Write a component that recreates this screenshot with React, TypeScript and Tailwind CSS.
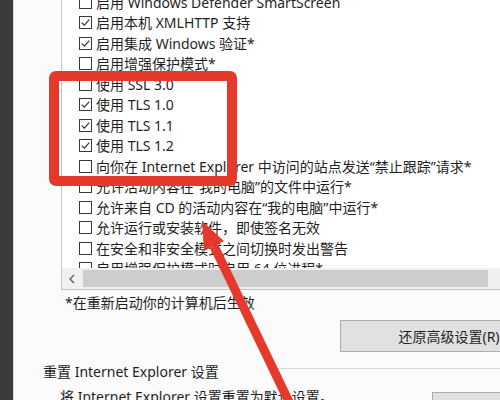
import React from "react";

interface OptionRow {
  label: string;
  on: boolean;
}

const rows: OptionRow[] = [
  { label: "启用 Windows Defender SmartScreen", on: false },
  { label: "启用本机 XMLHTTP 支持", on: true },
  { label: "启用集成 Windows 验证*", on: true },
  { label: "启用增强保护模式*", on: false },
  { label: "使用 SSL 3.0", on: false },
  { label: "使用 TLS 1.0", on: true },
  { label: "使用 TLS 1.1", on: true },
  { label: "使用 TLS 1.2", on: true },
  { label: "向你在 Internet Explorer 中访问的站点发送“禁止跟踪”请求*", on: false },
  { label: "允许活动内容在“我的电脑”的文件中运行*", on: false },
  { label: "允许来自 CD 的活动内容在“我的电脑”中运行*", on: false },
  { label: "允许运行或安装软件，即使签名无效", on: false },
  { label: "在安全和非安全模式之间切换时发出警告", on: false },
  { label: "启用增强保护模式时启用 64 位进程*", on: false },
];

function CheckBox({ on }: { on: boolean }) {
  return (
    <span className="flex h-[13px] w-[13px] shrink-0 items-center justify-center border border-[#3a3a3a] bg-white">
      {on && (
        <svg width="11" height="11" viewBox="0 0 11 11">
          <path d="M1.8 5.6 L4.3 8.1 L9.3 2.6" fill="none" stroke="#333" strokeWidth="1.2" />
        </svg>
      )}
    </span>
  );
}

export default function App() {
  return (
    <div className="relative flex h-[400px] w-[500px] overflow-hidden bg-white font-['Noto_Sans','Noto_Sans_CJK_SC',sans-serif] text-[14px] text-[#1f1f1f]">
      {/* dark window edge */}
      <div className="w-[13px] shrink-0 bg-[#3b3b3b]" />

      <div className="flex min-w-0 flex-1 flex-col border-l border-[#dcdce8] bg-[#fbfbfb]">
        {/* settings list */}
        <div className="ml-[47px] mt-[-8px] flex h-[298px] w-[500px] shrink-0 flex-col border-b border-l border-[#c4c4c4] bg-white">
          <div className="flex-1 overflow-hidden">
            {rows.map((r, i) => (
              <div key={i} className="flex h-[20.5px] items-center gap-[4px] whitespace-nowrap pl-[17px]">
                <CheckBox on={r.on} />
                <span>{r.label}</span>
              </div>
            ))}
          </div>
          <div className="flex h-[21px] shrink-0 items-center bg-[#f0f0f0]">
            <div className="flex w-[20px] justify-center">
              <svg width="8" height="10" viewBox="0 0 8 10">
                <path d="M6 1 L2 5 L6 9" fill="none" stroke="#606060" strokeWidth="1.4" />
              </svg>
            </div>
            <div className="ml-[1px] h-[17px] w-[405px] bg-[#cdcdcd]" />
          </div>
        </div>

        <p className="ml-[51px] mt-[3px] leading-[20px]">*在重新启动你的计算机后生效</p>

        <div className="ml-[326px] mt-[7px] flex h-[32px] w-[218px] shrink-0 items-center justify-center border border-[#adadad] bg-[#e1e1e1] whitespace-nowrap">
          还原高级设置(R)
        </div>

        {/* reset group */}
        <div className="mt-[10px] flex h-[20px] shrink-0">
          <span className="ml-[29px] whitespace-nowrap leading-[20px]">重置 Internet Explorer 设置</span>
          <div className="ml-[54px] mt-[6px] h-px flex-1 bg-[#d6d6d6]" />
        </div>
        <div className="mt-[5px] flex">
          <div className="w-[418px] shrink-0">
            <p className="ml-[46px] whitespace-nowrap leading-[20px]">将 Internet Explorer 设置重置为默认设置。</p>
          </div>
          <div className="mt-[5px] h-[32px] w-[90px] shrink-0 border border-[#adadad] bg-[#e1e1e1]" />
        </div>
      </div>

      {/* annotation overlays */}
      <div className="pointer-events-none absolute left-[49px] top-[71px] h-[115px] w-[188px] rounded-[7px] border-[10px] border-[#e5392c]" />
      <svg className="pointer-events-none absolute left-0 top-0" width="500" height="400" viewBox="0 0 500 400">
        <line x1="290" y1="404" x2="214" y2="246" stroke="#e5392c" strokeWidth="9" />
        <polygon points="202,221 224,241 204,251" fill="#e5392c" />
      </svg>
    </div>
  );
}
